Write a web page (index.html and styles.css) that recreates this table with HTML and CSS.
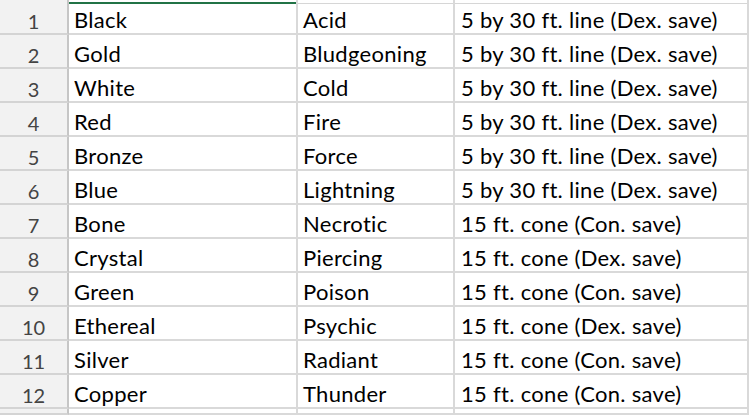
FILE: index.html
```html
<!DOCTYPE html>
<html>
<head>
<meta charset="utf-8">
<link rel="stylesheet" href="styles.css">
</head>
<body>
<div class="sheet">
  <div class="row top"><div class="hd"></div><div class="c b sel"></div><div class="c cc"></div><div class="c d"></div></div>
  <div class="row"><div class="hd">1</div><div class="c b">Black</div><div class="c cc">Acid</div><div class="c d">5 by 30 ft. line (Dex. save)</div></div>
  <div class="row"><div class="hd">2</div><div class="c b">Gold</div><div class="c cc">Bludgeoning</div><div class="c d">5 by 30 ft. line (Dex. save)</div></div>
  <div class="row"><div class="hd">3</div><div class="c b">White</div><div class="c cc">Cold</div><div class="c d">5 by 30 ft. line (Dex. save)</div></div>
  <div class="row"><div class="hd">4</div><div class="c b">Red</div><div class="c cc">Fire</div><div class="c d">5 by 30 ft. line (Dex. save)</div></div>
  <div class="row"><div class="hd">5</div><div class="c b">Bronze</div><div class="c cc">Force</div><div class="c d">5 by 30 ft. line (Dex. save)</div></div>
  <div class="row"><div class="hd">6</div><div class="c b">Blue</div><div class="c cc">Lightning</div><div class="c d">5 by 30 ft. line (Dex. save)</div></div>
  <div class="row"><div class="hd">7</div><div class="c b">Bone</div><div class="c cc">Necrotic</div><div class="c d">15 ft. cone (Con. save)</div></div>
  <div class="row"><div class="hd">8</div><div class="c b">Crystal</div><div class="c cc">Piercing</div><div class="c d">15 ft. cone (Dex. save)</div></div>
  <div class="row"><div class="hd">9</div><div class="c b">Green</div><div class="c cc">Poison</div><div class="c d">15 ft. cone (Con. save)</div></div>
  <div class="row"><div class="hd">10</div><div class="c b">Ethereal</div><div class="c cc">Psychic</div><div class="c d">15 ft. cone (Dex. save)</div></div>
  <div class="row"><div class="hd">11</div><div class="c b">Silver</div><div class="c cc">Radiant</div><div class="c d">15 ft. cone (Con. save)</div></div>
  <div class="row"><div class="hd">12</div><div class="c b">Copper</div><div class="c cc">Thunder</div><div class="c d">15 ft. cone (Con. save)</div></div>
  <div class="row last"><div class="hd"></div><div class="c b"></div><div class="c cc"></div><div class="c d"></div></div>
</div>
</body>
</html>
```
FILE: styles.css
```css
* { box-sizing: border-box; }
html, body {
  margin: 0;
  padding: 0;
  background: #ffffff;
  overflow: hidden;
}
body {
  width: 750px;
  height: 415px;
  font-family: Lato, "Open Sans", sans-serif;
  color: #000000;
}
.sheet {
  display: flex;
  flex-direction: column;
}
.row {
  display: grid;
  grid-template-columns: 69px 229px 157px 294px 1px;
  height: 34px;
}
.row.top {
  height: 1px;
}
.row.top .c { border-bottom: 1px solid #d6d6d6; }
.row.top .hd { border-bottom: 1px solid #c9c9c9; }
.row.top .sel { border-bottom: 2px solid #217346; }
.row.last {
  height: 6px;
}
.hd {
  background: #f2f2f2;
  border-right: 2px solid #c6c6c6;
  border-bottom: 2px solid #d4d4d4;
  color: #444444;
  font-size: 20px;
  display: flex;
  align-items: flex-end;
  justify-content: center;
  padding-bottom: 2px;
  line-height: 1;
}
.c {
  border-right: 2px solid #d9d9d9;
  border-bottom: 2px solid #d9d9d9;
  font-size: 22px;
  letter-spacing: 0.3px;
  line-height: 1;
  padding: 0 0 2px 6px;
  display: flex;
  align-items: flex-end;
  white-space: nowrap;
}
.c.b { padding-left: 5px; }
.c.cc { padding-left: 5px; }
.c.d { padding-left: 6px; }
```
